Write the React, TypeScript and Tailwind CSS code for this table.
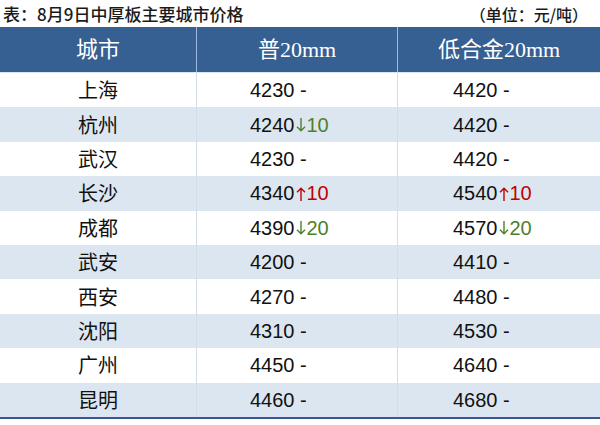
const rows: { city: string; a: string; ad?: string; b: string; bd?: string }[] = [
  { city: "上海", a: "4230", b: "4420" },
  { city: "杭州", a: "4240", ad: "↓10", b: "4420" },
  { city: "武汉", a: "4230", b: "4420" },
  { city: "长沙", a: "4340", ad: "↑10", b: "4540", bd: "↑10" },
  { city: "成都", a: "4390", ad: "↓20", b: "4570", bd: "↓20" },
  { city: "武安", a: "4200", b: "4410" },
  { city: "西安", a: "4270", b: "4480" },
  { city: "沈阳", a: "4310", b: "4530" },
  { city: "广州", a: "4450", b: "4640" },
  { city: "昆明", a: "4460", b: "4680" },
];

const Arrow = ({ up }: { up: boolean }) => (
  <svg
    width="10"
    height="14"
    viewBox="0 0 10 14"
    className={`mx-[1px] ${up ? "" : "rotate-180"}`}
    fill="none"
    stroke="currentColor"
    strokeWidth="1.4"
  >
    <path d="M5 1.2V14M1 5.2L5 1.2L9 5.2" />
  </svg>
);

const Price = ({ value, delta }: { value: string; delta?: string }) => {
  if (!delta) return <span>{value} -</span>;
  const up = delta.startsWith("↑");
  return (
    <span className="flex items-center">
      {value}
      <span className={`flex items-center ${up ? "text-[#c00000]" : "text-[#4f7f2a]"}`}>
        <span className="pt-[1px]">
          <Arrow up={up} />
        </span>
        {delta.slice(1)}
      </span>
    </span>
  );
};

export default function App() {
  return (
    <div className="w-[600px] h-[425px] bg-white overflow-hidden font-['Liberation_Sans','Noto_Sans_CJK_SC',sans-serif]">
      <div className="h-[27px] flex items-center justify-between pl-[3px] pr-[12px] text-[#1a1a1a] font-['Noto_Sans_CJK_SC',sans-serif] font-medium">
        <span className="text-[17px]">表：8月9日中厚板主要城市价格</span>
        <span className="text-[16px]">（单位：元/吨）</span>
      </div>
      <div className="grid grid-cols-[196px_1px_200px_1px_202px] h-[46px] bg-[#366092] text-white text-[22px] font-['Liberation_Serif','Noto_Sans_CJK_SC',serif] border-b border-[#dbe6f4]">
        <div className="flex items-center justify-center">城市</div>
        <div className="bg-[#9dbbe0]" />
        <div className="flex items-center justify-center">普20mm</div>
        <div className="bg-[#9dbbe0]" />
        <div className="flex items-center justify-center">低合金20mm</div>
      </div>
      {rows.map((r, i) => (
        <div
          key={r.city}
          className={`grid grid-cols-[196px_1px_200px_1px_202px] h-[34.4px] text-[20px] text-[#111] ${i % 2 === 1 ? "bg-[#dce6f1]" : "bg-white"}`}
        >
          <div className="flex items-center justify-center font-['Noto_Sans_CJK_SC',sans-serif]">{r.city}</div>
          <div className="bg-[#d3dde9]" />
          <div className="flex items-center pl-[53px]">
            <Price value={r.a} delta={r.ad} />
          </div>
          <div className="bg-[#d3dde9]" />
          <div className="flex items-center pl-[55px]">
            <Price value={r.b} delta={r.bd} />
          </div>
        </div>
      ))}
      <div className="h-[2px] bg-[#3b5894]" />
    </div>
  );
}
